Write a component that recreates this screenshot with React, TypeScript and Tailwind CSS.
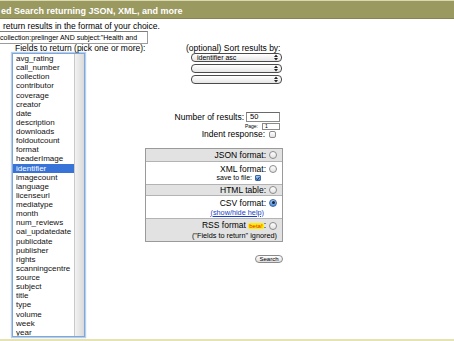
import React from "react";

const fields = [
  "avg_rating", "call_number", "collection", "contributor", "coverage", "creator", "date",
  "description", "downloads", "foldoutcount", "format", "headerImage", "identifier",
  "imagecount", "language", "licenseurl", "mediatype", "month", "num_reviews",
  "oai_updatedate", "publicdate", "publisher", "rights", "scanningcentre", "source",
  "subject", "title", "type", "volume", "week", "year",
];

const Radio = ({ checked }: { checked?: boolean }) =>
  checked ? (
    <span className="inline-flex items-center justify-center w-[8px] h-[8px] rounded-full border border-[#3b6aa6] bg-gradient-to-b from-[#a9cbf2] to-[#4d8ad8]">
      <span className="w-[3px] h-[3px] rounded-full bg-[#15243a]" />
    </span>
  ) : (
    <span className="inline-block w-[8px] h-[8px] rounded-full border border-[#8c8c8c] bg-gradient-to-b from-white to-[#e2e2e2]" />
  );

const Select = ({ value }: { value?: string }) => (
  <div className="flex items-center h-[9px] w-[91px] rounded-[4px] border border-[#4a4a4a] bg-gradient-to-b from-white to-[#e6e6e6] pl-[5px] pr-[3px] text-[7px] leading-none text-black">
    <span className="flex-1">{value}</span>
    <svg width="4" height="7" viewBox="0 0 4 7">
      <path d="M0 3 L2 0.5 L4 3Z M0 4 L2 6.5 L4 4Z" fill="#222" />
    </svg>
  </div>
);

export default function App() {
  return (
    <div className="w-[454px] h-[341px] overflow-hidden bg-white text-black font-['Liberation_Sans',Arial,sans-serif]">
      {/* title bar */}
      <div className="h-[19px] bg-[#9a995f] border-t border-[#d9d8b0] border-b border-b-[#86854f] pt-[5px] pl-[1px] text-[9px] leading-[11px] font-bold text-white whitespace-nowrap">
        ed Search returning JSON, XML, and more
      </div>

      <div className="mt-[2px] pl-[3px] text-[8.5px] leading-[10px] whitespace-nowrap">
        return results in the format of your choice.
      </div>

      <div className="h-[13px] w-[148px] border border-l-0 border-[#9c9c9c] border-t-[#7d7d7d] flex items-center text-[7px] leading-none whitespace-nowrap overflow-hidden">
        collection:prelinger AND subject:"Health and
      </div>

      <div className="flex">
        {/* left column */}
        <div className="w-[145px]">
          <div className="pl-[15px] text-[8.5px] leading-[9px] whitespace-nowrap">
            Fields to return (pick one or more):
          </div>
          <div className="ml-[12px] w-[73px] h-[284px] flex border border-[#7fa7d8] shadow-[0_0_1px_1px_#b7cfee] bg-white">
            <div className="flex-1 overflow-hidden">
              {fields.map((f) => (
                <div
                  key={f}
                  className={`h-[9.14px] pl-[3px] text-[8px] leading-[9.14px] whitespace-nowrap ${
                    f === "identifier" ? "bg-[#3874d8] text-white" : "text-[#111]"
                  }`}
                >
                  {f}
                </div>
              ))}
            </div>
            <div className="w-[10px] border-l border-[#c9c9c9] bg-gradient-to-r from-[#f2f2f2] to-[#dadada]" />
          </div>
        </div>

        {/* right column */}
        <div className="w-[140px]">
          <div className="pl-[41px] text-[8.5px] leading-[9px] whitespace-nowrap">
            (optional) Sort results by:
          </div>
          <div className="ml-[46px] flex flex-col gap-[2px]">
            <Select value="identifier asc" />
            <Select />
            <Select />
          </div>

          <div className="mt-[28px] flex items-center justify-end pr-[5px] gap-[2px] h-[10px] text-[8.5px] leading-none">
            <span>Number of results:</span>
            <div className="w-[34px] h-[10px] border border-[#8a8a8a] border-t-[#6a6a6a] pl-[3px] text-[7.5px] leading-[8px]">50</div>
          </div>
          <div className="mt-[1px] flex items-center justify-end pr-[5px] gap-[4px] h-[7px]">
            <span className="text-[5px] leading-none">Page:</span>
            <div className="w-[18px] h-[7px] border border-[#8a8a8a] pl-[2px] text-[5px] leading-[5px]">1</div>
          </div>
          <div className="mt-[0px] flex items-center justify-end pr-[9px] gap-[4px] h-[8px] text-[8.5px] leading-none">
            <span>Indent response:</span>
            <span className="w-[7px] h-[7px] rounded-[2px] border border-[#8c8c8c] bg-gradient-to-b from-white to-[#e2e2e2]" />
          </div>

          {/* output formats */}
          <div className="mt-[10px] w-[138px] border border-[#9a9a9a] text-[8.5px] leading-[10px]">
            <div className="h-[13px] bg-[#e2e2e2] border-b border-[#b3b3b3] flex items-center justify-end gap-[3px] pr-[5px]">
              <span>JSON format:</span>
              <Radio />
            </div>
            <div className="h-[23px] bg-white border-b border-[#b3b3b3] flex flex-col justify-center">
              <div className="flex items-center justify-end gap-[3px] pr-[5px]">
                <span>XML format:</span>
                <Radio />
              </div>
              <div className="flex items-center justify-end gap-[3px] pr-[21px] text-[7px] leading-[8px]">
                <span>save to file:</span>
                <span className="w-[6px] h-[6px] rounded-[1px] border border-[#3b6aa6] bg-gradient-to-b from-[#a9cbf2] to-[#4d8ad8] flex items-center justify-center">
                  <svg width="5" height="5" viewBox="0 0 5 5">
                    <path d="M0.6 2.6 L2 4 L4.6 0.4" fill="none" stroke="#102038" strokeWidth="1" />
                  </svg>
                </span>
              </div>
            </div>
            <div className="h-[11px] bg-[#e2e2e2] border-b border-[#b3b3b3] flex items-center justify-end gap-[3px] pr-[5px]">
              <span>HTML table:</span>
              <Radio />
            </div>
            <div className="h-[23px] bg-white border-b border-[#b3b3b3] flex flex-col justify-center">
              <div className="flex items-center justify-end gap-[3px] pr-[5px]">
                <span>CSV format:</span>
                <Radio checked />
              </div>
              <div className="flex justify-end pr-[18px] text-[7.3px] leading-[9px]">
                <a className="text-[#1a3fc4] underline">(show/hide help)</a>
              </div>
            </div>
            <div className="h-[22px] bg-[#e2e2e2] flex flex-col justify-center">
              <div className="flex items-center justify-end gap-[3px] pr-[5px]">
                <span>
                  RSS format{" "}
                  <span className="bg-[#ffee00] text-[#e0201a] text-[6px] px-[1px] rounded-[2px]">beta!</span>:
                </span>
                <Radio />
              </div>
              <div className="flex justify-end pr-[5px] text-[7.3px] leading-[9px] whitespace-nowrap">
                ("Fields to return" ignored)
              </div>
            </div>
          </div>

          <div className="mt-[13px] flex justify-end pr-[2px]">
            <div className="h-[8px] w-[28px] rounded-full border border-[#8a8a8a] bg-gradient-to-b from-white to-[#dedede] flex items-center justify-center text-[6px] leading-none">
              Search
            </div>
          </div>
        </div>
      </div>

      <div className="mt-[2px] h-[2px] bg-[#e6e3b3]" />
    </div>
  );
}
